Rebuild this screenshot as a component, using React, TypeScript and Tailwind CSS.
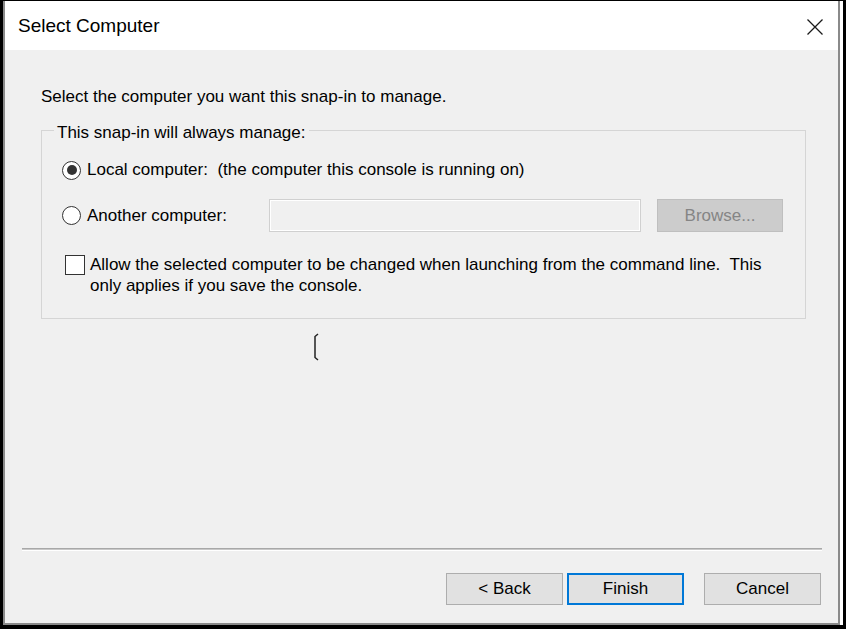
import React from "react";

const font = { fontFamily: '"Liberation Sans", Arial, sans-serif' };

function Radio({ checked }: { checked?: boolean }) {
  return (
    <div className="w-[19px] h-[19px] rounded-full border border-[#333333] bg-white flex items-center justify-center shrink-0">
      {checked && <div className="w-[10px] h-[10px] rounded-full bg-[#333333]" />}
    </div>
  );
}

function Btn({ label, focused }: { label: string; focused?: boolean }) {
  return (
    <div
      className={
        "w-[117px] h-[32px] flex items-center justify-center bg-[#e1e1e1] text-[17px] text-black " +
        (focused ? "border-2 border-[#0078d7]" : "border border-[#adadad]")
      }
    >
      {label}
    </div>
  );
}

export default function App() {
  return (
    <div
      className="w-[846px] h-[629px] bg-black flex pt-[1px] pl-[3px] pr-[3px] pb-[4px] overflow-hidden"
      style={font}
    >
      <div className="flex-1 flex flex-col border-l-2 border-b-2 border-r-2 border-[#8a8a8a]">
        {/* Title bar */}
        <div className="h-[49px] bg-white flex items-center justify-between pl-[13px] pr-[15px] pt-[2px] shrink-0">
          <span className="text-[19px] text-black">Select Computer</span>
          <svg width="16" height="16" viewBox="0 0 16 16">
            <path d="M0.5 0.5 L15.5 15.5 M15.5 0.5 L0.5 15.5" stroke="#1a1a1a" strokeWidth="1.3" fill="none" />
          </svg>
        </div>
        {/* Body */}
        <div className="relative flex-1 bg-[#f0f0f0] flex flex-col">
          <div className="pl-[36px] pr-[32px]">
            <div className="mt-[37px] text-[17px] leading-[20px] text-black">
              Select the computer you want this snap-in to manage.
            </div>
            <div className="relative mt-[23px] h-[189px] border border-[#d5d5d5] pt-[27px] pl-[20px]">
              <div className="absolute top-[-8px] left-[12px] px-[3px] bg-[#f0f0f0] text-[17px] leading-[20px] text-black">
                This snap-in will always manage:
              </div>
              <div className="h-[24px] flex items-center">
                <Radio checked />
                <span className="ml-[6px] text-[17px] text-black whitespace-pre">
                  {"Local computer:  (the computer this console is running on)"}
                </span>
              </div>
              <div className="mt-[17px] h-[33px] flex items-center">
                <Radio />
                <span className="ml-[6px] w-[182px] text-[17px] text-black whitespace-nowrap">
                  Another computer:
                </span>
                <div className="w-[372px] h-[33px] border border-[#d0d0d0] bg-[#f0f0f0] shadow-[inset_0_0_0_1px_#ffffff]" />
                <div className="ml-[16px] w-[126px] h-[33px] border border-[#bfbfbf] bg-[#cccccc] flex items-center justify-center text-[17px] text-[#858585]">
                  Browse...
                </div>
              </div>
              <div className="mt-[22px] flex items-start pl-[3px]">
                <div className="mt-[1px] w-[20px] h-[20px] border border-[#333333] bg-white shrink-0" />
                <div className="ml-[5px] text-[17px] leading-[21px] text-black whitespace-pre">
                  {"Allow the selected computer to be changed when launching from the command line.  This"}
                  <br />
                  {"only applies if you save the console."}
                </div>
              </div>
            </div>
          </div>
          {/* mouse cursor */}
          <svg
            className="absolute left-[306px] top-[283px]"
            width="10"
            height="28"
            viewBox="0 0 10 28"
          >
            <path d="M7 1 L4 3.5 L4 24.5 L7 27" stroke="#222" strokeWidth="1.5" fill="none" />
          </svg>
          <div className="flex-1" />
          <div className="ml-[17px] mr-[16px] h-[2px] bg-[#a8a8a8] border-b border-b-[#c8c8c8]" />
          <div className="h-[1px] ml-[17px] mr-[16px] bg-white" />
          <div className="flex justify-end mt-[22px] mb-[18px] mr-[17px]">
            <Btn label="< Back" />
            <div className="ml-[4px]">
              <Btn label="Finish" focused />
            </div>
            <div className="ml-[20px]">
              <Btn label="Cancel" />
            </div>
          </div>
        </div>
      </div>
      <div className="w-[3px] bg-white" />
    </div>
  );
}
